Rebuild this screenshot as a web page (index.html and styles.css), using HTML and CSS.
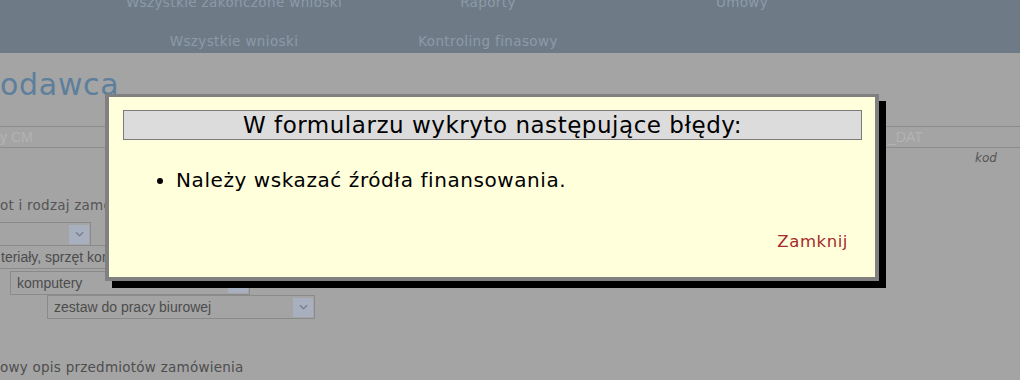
FILE: index.html
```html
<!DOCTYPE html>
<html lang="pl">
<head>
<meta charset="utf-8">
<title>Formularz</title>
<link rel="stylesheet" href="styles.css">
</head>
<body>
<nav class="nav">
  <div class="nav-grid">
    <a class="nav-item">Wszystkie zakończone wnioski</a>
    <a class="nav-item">Raporty</a>
    <a class="nav-item">Umowy</a>
    <a class="nav-item">Wszystkie wnioski</a>
    <a class="nav-item">Kontroling finasowy</a>
  </div>
</nav>
<main class="page">
  <h1 class="title">odawca</h1>
  <div class="thead">
    <span class="th th-first">y CM</span>
    <span class="th th-dat">_DAT</span>
  </div>
  <div class="subhead"><em>kod</em></div>
  <div class="label">ot i rodzaj zamówienia</div>
  <div class="selects">
    <div class="select clipped s1"><span class="select-text"></span><span class="arrow"><svg viewBox="0 0 10 6" width="9" height="6"><path d="M1 1 L5 5 L9 1" fill="none" stroke="#7a8292" stroke-width="1.6"/></svg></span></div>
    <div class="select clipped s2"><span class="select-text">teriały, sprzęt komputerowy</span><span class="arrow"><svg viewBox="0 0 10 6" width="9" height="6"><path d="M1 1 L5 5 L9 1" fill="none" stroke="#7a8292" stroke-width="1.6"/></svg></span></div>
    <div class="select s3"><span class="select-text">komputery</span><span class="arrow"><svg viewBox="0 0 10 6" width="9" height="6"><path d="M1 1 L5 5 L9 1" fill="none" stroke="#7a8292" stroke-width="1.6"/></svg></span></div>
    <div class="select s4"><span class="select-text">zestaw do pracy biurowej</span><span class="arrow"><svg viewBox="0 0 10 6" width="9" height="6"><path d="M1 1 L5 5 L9 1" fill="none" stroke="#7a8292" stroke-width="1.6"/></svg></span></div>
  </div>
  <div class="label label-desc">owy opis przedmiotów zamówienia</div>
</main>

<div class="modal" role="dialog">
  <div class="modal-title">W formularzu wykryto następujące błędy:</div>
  <ul class="modal-list">
    <li>Należy wskazać źródła finansowania.</li>
  </ul>
  <div class="modal-actions"><a class="close">Zamknij</a></div>
</div>
</body>
</html>
```
FILE: styles.css
```css
html, body {
  margin: 0;
  padding: 0;
}
body {
  width: 1020px;
  height: 380px;
  overflow: hidden;
  background: #a4a4a4;
  font-family: "DejaVu Sans", Verdana, sans-serif;
  position: relative;
}

/* navigation */
.nav {
  height: 53px;
  background: #6e7b87;
  overflow: hidden;
}
.nav-grid {
  display: grid;
  grid-template-columns: repeat(3, 254px);
  grid-auto-rows: 39px;
  padding-left: 107px;
  margin-top: -17px;
}
.nav-item {
  font-size: 13.5px;
  letter-spacing: 0.38px;
  line-height: 39px;
  text-align: center;
  color: #8d9aa7;
  white-space: nowrap;
}

/* page */
.page {
  display: flex;
  flex-direction: column;
}
.title {
  margin: 14px 0 0;
  font-size: 30px;
  letter-spacing: 0.7px;
  line-height: 36px;
  font-weight: normal;
  color: #5d7f9c;
}
.thead {
  margin-top: 23px;
  height: 20px;
  border-top: 1px solid #8c8c8c;
  border-bottom: 1px solid #8c8c8c;
  display: flex;
  align-items: center;
  font-family: "Liberation Sans", Arial, sans-serif;
  font-size: 14px;
  color: #b3b3b3;
}
.th-first {
  width: 888px;
}
.subhead {
  height: 20px;
  text-align: right;
  padding-right: 23px;
  font-size: 12px;
  line-height: 20px;
  color: #555555;
}
.label {
  margin-top: 29px;
  font-size: 13.5px;
  letter-spacing: 0.24px;
  line-height: 16px;
  color: #555555;
  white-space: nowrap;
}
.label-desc {
  margin-top: 40px;
  color: #4e4e4e;
}
.selects {
  margin-top: 9px;
  display: flex;
  flex-direction: column;
  align-items: flex-start;
}
.select {
  box-sizing: border-box;
  height: 24px;
  border: 1px solid #8a8a8a;
  display: flex;
  align-items: center;
  justify-content: space-between;
  padding: 1px 1px 1px 6px;
  font-family: "Liberation Sans", Arial, sans-serif;
  font-size: 14px;
  color: #4c4c4c;
  white-space: nowrap;
}
.select.clipped {
  border-left: 0;
  padding-left: 1px;
}
.arrow {
  width: 20px;
  height: 19px;
  background: #a8b0c0;
  display: flex;
  align-items: center;
  justify-content: center;
}
.s1 { width: 91px; }
.s2 { width: 320px; margin-top: -1px; }
.s3 { width: 240px; margin-left: 10px; margin-top: 2px; }
.s4 { width: 268px; margin-left: 47px; margin-top: 0; }

/* modal */
.modal {
  position: absolute;
  left: 105px;
  top: 94px;
  width: 774px;
  height: 187px;
  box-sizing: border-box;
  border-style: solid;
  border-color: #808080;
  border-width: 3px 4px 4px 4px;
  background: #ffffdc;
  box-shadow: 7px 7px 0 #000;
  padding: 13px 13px 0 14px;
}
.modal-title {
  box-sizing: border-box;
  height: 30px;
  border: 1px solid #7a7a7a;
  background: #dcdcdc;
  text-align: center;
  font-size: 23px;
  letter-spacing: 0.53px;
  line-height: 28px;
  color: #000;
}
.modal-list {
  margin: 29px 0 0;
  padding-left: 53px;
  font-size: 20px;
  letter-spacing: 0.58px;
  line-height: 23px;
  color: #000;
}
.modal-actions {
  margin-top: 40px;
  text-align: right;
  padding-right: 14px;
}
.close {
  font-size: 16.5px;
  letter-spacing: 0.57px;
  line-height: 20px;
  color: #a52a2a;
  cursor: pointer;
}
```
